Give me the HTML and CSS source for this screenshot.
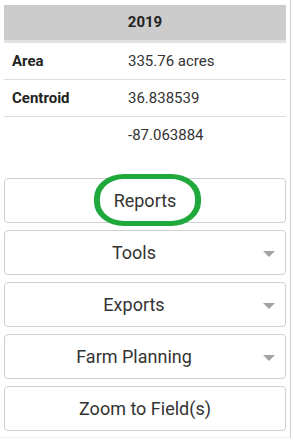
FILE: index.html
```html
<!DOCTYPE html>
<html lang="en">
<head>
    <meta charset="UTF-8">
    <meta name="viewport" content="width=device-width, initial-scale=1.0">
    <title>Field Details</title>
    <link rel="stylesheet" href="styles.css">
</head>
<body>
    <div class="panel">
        <div class="year-header">2019</div>
        <div class="info-row">
            <span class="label">Area</span>
            <span class="value">335.76 acres</span>
        </div>
        <div class="info-row">
            <span class="label">Centroid</span>
            <span class="value">36.838539</span>
        </div>
        <div class="info-row last">
            <span class="label"></span>
            <span class="value">-87.063884</span>
        </div>

        <div class="actions">
            <button class="action-btn highlighted">
                <span class="btn-text">Reports</span>
                <span class="circle-mark"></span>
            </button>
            <button class="action-btn dropdown">
                <span class="btn-text">Tools</span>
                <span class="caret"></span>
            </button>
            <button class="action-btn dropdown">
                <span class="btn-text">Exports</span>
                <span class="caret"></span>
            </button>
            <button class="action-btn dropdown">
                <span class="btn-text">Farm Planning</span>
                <span class="caret"></span>
            </button>
            <button class="action-btn">
                <span class="btn-text">Zoom to Field(s)</span>
            </button>
        </div>
    </div>
</body>
</html>
```

FILE: styles.css
```css
body {
    margin: 0;
    background: #fff;
    font-family: Roboto, "Liberation Sans", Arial, sans-serif;
    color: #2b2b2b;
}

.panel {
    width: 282px;
    height: 432px;
    padding: 5px 4px 0;
    border-right: 1px solid #cfcfcf;
    border-bottom: 1px solid #efefef;
}

.year-header {
    height: 35px;
    line-height: 35px;
    background-color: #cccccc;
    border-bottom: 3px solid #e2e2e2;
    text-align: center;
    font-weight: bold;
    font-size: 15px;
    color: #222;
}

.info-row {
    display: flex;
    align-items: center;
    height: 36px;
    padding-left: 8px;
    border-bottom: 1px solid #dcdcdc;
    font-size: 15px;
}

.info-row.last {
    border-bottom: none;
}

.label {
    width: 116px;
    font-weight: bold;
    color: #222;
}

.value {
    color: #333;
}

.actions {
    margin-top: 25px;
}

.action-btn {
    position: relative;
    display: flex;
    align-items: center;
    width: 100%;
    height: 45px;
    margin-bottom: 7px;
    padding: 0;
    background: #fff;
    border: 1px solid #cfcfcf;
    border-radius: 4px;
    font-family: inherit;
    font-size: 18px;
    color: #333;
}

.btn-text {
    flex: 1;
    text-align: center;
}

.action-btn.dropdown {
    padding-right: 10px;
}

.caret {
    width: 0;
    height: 0;
    border-left: 6px solid transparent;
    border-right: 6px solid transparent;
    border-top: 6px solid #a3a3a3;
    margin-top: 3px;
}

.circle-mark {
    position: absolute;
    left: 89px;
    top: -5px;
    width: 95px;
    height: 42px;
    border: 5px solid #1fa83c;
    border-left-width: 6px;
    border-right-width: 6px;
    border-radius: 30px / 24px;
}
```
